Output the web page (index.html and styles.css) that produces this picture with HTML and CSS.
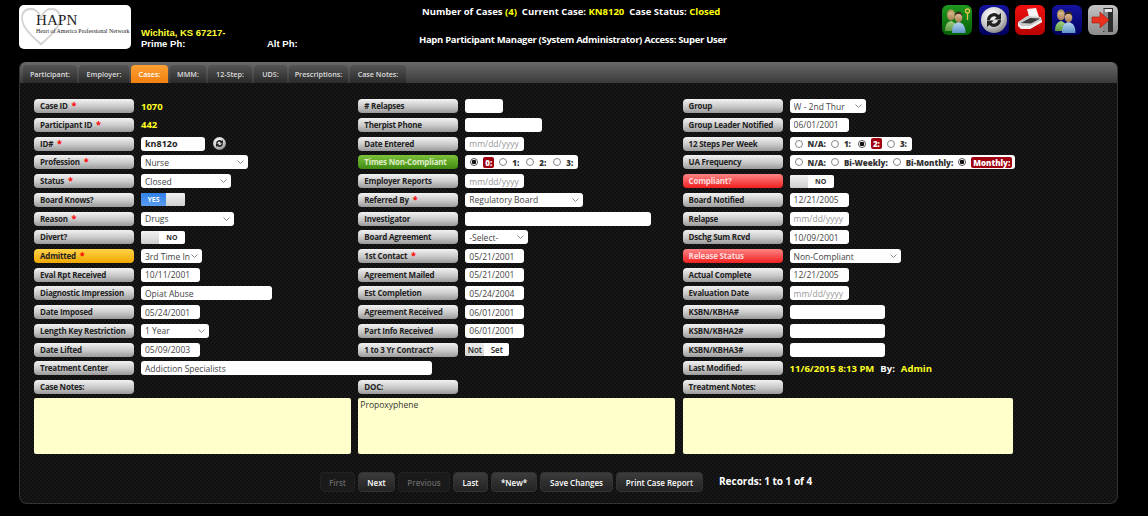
FILE: index.html
```html
<!DOCTYPE html>
<html lang="en">
<head>
<meta charset="utf-8">
<title>HAPN Participant Manager</title>
<link rel="stylesheet" href="styles.css">
</head>
<body>
<svg class="defs" width="0" height="0" aria-hidden="true">
  <defs>
    <linearGradient id="skinA" x1="0" y1="0" x2="0" y2="1"><stop offset="0" stop-color="#e8c49a"/><stop offset="1" stop-color="#a67c52"/></linearGradient>
    <linearGradient id="shirtB" x1="0" y1="0" x2="0" y2="1"><stop offset="0" stop-color="#b9d8f2"/><stop offset="1" stop-color="#5d93c7"/></linearGradient>
    <linearGradient id="shirtG" x1="0" y1="0" x2="0" y2="1"><stop offset="0" stop-color="#a5cf86"/><stop offset="1" stop-color="#5c9a3f"/></linearGradient>
    <radialGradient id="disc" cx=".4" cy=".3" r=".8"><stop offset="0" stop-color="#fff"/><stop offset=".6" stop-color="#c4c4c4"/><stop offset="1" stop-color="#6e6e6e"/></radialGradient>
    <symbol id="people" viewBox="0 0 30 30">
      <path d="M3 26c0-6 2-9 6-10 4 1 6 4 6 10z" fill="url(#shirtG)"/>
      <ellipse cx="9" cy="10.500" rx="3.800" ry="5" fill="url(#skinA)"/>
      <path d="M5.200 9.500C5 6 7 4.500 9 4.500s4 1.500 3.800 5c-1-2-2-2.500-3.800-2.500s-2.800.5-3.800 2.500z" fill="#b59a5e"/>
      <path d="M10 28c0-7 2-10 6.500-11 4.500 1 7 4 7 11z" fill="url(#shirtB)"/>
      <ellipse cx="16.500" cy="12.500" rx="3.800" ry="5" fill="url(#skinA)"/>
      <path d="M12.700 11.500c-.2-3.500 1.800-5 3.800-5s4 1.500 3.800 5c-1-2-2-2.500-3.800-2.500s-2.800.5-3.800 2.500z" fill="#3d2c20"/>
    </symbol>
    <symbol id="swirl" viewBox="0 0 30 30">
      <circle cx="15" cy="15" r="13" fill="url(#disc)"/>
      <path d="M8 15a7 7 0 0 1 11.800-5l2.200-2.200v6.700h-6.700l2.200-2.200a4 4 0 0 0-6.500 2.700zM22 15a7 7 0 0 1-11.800 5L8 22.200v-6.700h6.700l-2.200 2.200a4 4 0 0 0 6.500-2.700z" fill="#222"/>
    </symbol>
  </defs>
</svg>

<header class="top">
  <div class="logo">
    <svg class="logo-heart" viewBox="0 0 60 44" preserveAspectRatio="none" aria-hidden="true"><path d="M30 41C14 30 3 22 3 12 3 5 9 2 15 2c7 0 12 4 15 10 3-6 8-10 15-10 6 0 12 3 12 10 0 10-11 18-27 29z" fill="none" stroke="#d4d4d4" stroke-width="2.500"/></svg>
    <div class="logo-name">HAPN</div>
    <div class="logo-sub">Heart of America Professional Network</div>
  </div>
  <div class="address">
    <div class="addr-city">Wichita, KS 67217-</div>
    <div class="addr-phones"><span class="prime">Prime Ph:</span><span>Alt Ph:</span></div>
  </div>
  <div class="summary">
    <div class="sum-cases">Number of Cases <span class="hl">(4)</span>&nbsp; Current Case: <span class="hl">KN8120</span>&nbsp; Case Status: <span class="hl">Closed</span></div>
    <div class="sum-user">Hapn Participant Manager (System Administrator) Access: Super User</div>
  </div>
  <nav class="tools">
    <a class="tool tool-green"><svg viewBox="0 0 30 30"><use href="#people"/><circle cx="25.500" cy="6" r="2" fill="none" stroke="#e2c24a" stroke-width="1.300"/><path d="M25.500 8v7" stroke="#e2c24a" stroke-width="1.300"/></svg></a>
    <a class="tool tool-navy"><svg viewBox="0 0 30 30"><use href="#swirl"/></svg></a>
    <a class="tool tool-red"><svg viewBox="0 0 30 30"><path d="M12 4l9-1 3 9H14z" fill="#f4f4f4"/><path d="M3 17l9-6 14 1 1 5-12 7H6z" fill="#c9c9c9"/><path d="M6 18l9-5 10 .5-9 5z" fill="#3a3a3a"/><path d="M3 17v4l3 3h9l12-7v-2l-12 6H6z" fill="#f2f2f2"/></svg></a>
    <a class="tool tool-navy"><svg viewBox="0 0 30 30"><use href="#people"/></svg></a>
    <a class="tool tool-grey"><svg viewBox="0 0 30 30"><path d="M15 3h10v24H15z" fill="#2d2d2d"/><path d="M15 3l5 3v22l-5-2z" fill="#8a8a8a"/><path d="M17 4h7v3h-7z" fill="#e6e6e6"/><path d="M4 12h8V7l9 8-9 8v-5H4z" fill="#e8321e" stroke="#9c1a0c" stroke-width=".6"/></svg></a>
  </nav>
</header>

<main class="panel">
  <div class="tabs">
    <a class="tab tab-participant">Participant:</a>
    <a class="tab tab-employer">Employer:</a>
    <a class="tab tab-cases is-active">Cases:</a>
    <a class="tab tab-mmm">MMM:</a>
    <a class="tab tab-step">12-Step:</a>
    <a class="tab tab-uds">UDS:</a>
    <a class="tab tab-rx">Prescriptions:</a>
    <a class="tab tab-notes">Case Notes:</a>
  </div>

  <form class="form">
    <div class="cell"><span class="lab">Case ID <i>*</i></span><span class="readout">1070</span></div>
    <div class="cell"><span class="lab"># Relapses</span><input class="fld w38"></div>
    <div class="cell"><span class="lab">Group</span><select class="fld sel w76"><option>W - 2nd Thur</option></select></div>

    <div class="cell"><span class="lab">Participant ID <i>*</i></span><span class="readout">442</span></div>
    <div class="cell"><span class="lab">Therpist Phone</span><input class="fld w77"></div>
    <div class="cell"><span class="lab">Group Leader Notified</span><input class="fld date" value="06/01/2001"></div>

    <div class="cell"><span class="lab">ID# <i>*</i></span><input class="fld w64 strong" value="kn812o"><svg class="mini" viewBox="0 0 30 30" aria-hidden="true"><use href="#swirl"/></svg></div>
    <div class="cell"><span class="lab">Date Entered</span><input class="fld date" placeholder="mm/dd/yyyy"></div>
    <div class="cell"><span class="lab">12 Steps Per Week</span>
      <div class="radios"><input type="radio" name="steps"><b>N/A:</b><input type="radio" name="steps"><b class="num">1:</b><input type="radio" name="steps" checked><b class="on">2:</b><input type="radio" name="steps"><b class="num">3:</b></div></div>

    <div class="cell"><span class="lab">Profession <i>*</i></span><select class="fld sel w107"><option>Nurse</option></select></div>
    <div class="cell"><span class="lab lab-green">Times Non-Compliant</span>
      <div class="radios"><input type="radio" name="times" checked><b class="on">0:</b><input type="radio" name="times"><b class="num">1:</b><input type="radio" name="times"><b class="num">2:</b><input type="radio" name="times"><b class="num">3:</b></div></div>
    <div class="cell"><span class="lab">UA Frequency</span>
      <div class="radios"><input type="radio" name="ua"><b>N/A:</b><input type="radio" name="ua"><b>Bi-Weekly:</b><input type="radio" name="ua"><b>Bi-Monthly:</b><input type="radio" name="ua" checked><b class="on">Monthly:</b></div></div>

    <div class="cell"><span class="lab">Status <i>*</i></span><select class="fld sel w90"><option>Closed</option></select></div>
    <div class="cell"><span class="lab">Employer Reports</span><input class="fld date" placeholder="mm/dd/yyyy"></div>
    <div class="cell"><span class="lab lab-red">Compliant?</span><span class="toggle"><span class="knob"></span><span class="tog-no">NO</span></span></div>

    <div class="cell"><span class="lab">Board Knows?</span><span class="toggle"><span class="tog-yes">YES</span><span class="knob"></span></span></div>
    <div class="cell"><span class="lab">Referred By <i>*</i></span><select class="fld sel w118"><option>Regulatory Board</option></select></div>
    <div class="cell"><span class="lab">Board Notified</span><input class="fld date" value="12/21/2005"></div>

    <div class="cell"><span class="lab">Reason <i>*</i></span><select class="fld sel w93"><option>Drugs</option></select></div>
    <div class="cell"><span class="lab">Investigator</span><input class="fld w186"></div>
    <div class="cell"><span class="lab">Relapse</span><input class="fld date" placeholder="mm/dd/yyyy"></div>

    <div class="cell"><span class="lab">Divert?</span><span class="toggle"><span class="knob"></span><span class="tog-no">NO</span></span></div>
    <div class="cell"><span class="lab">Board Agreement</span><select class="fld sel w63"><option>-Select-</option></select></div>
    <div class="cell"><span class="lab">Dschg Sum Rcvd</span><input class="fld date" value="10/09/2001"></div>

    <div class="cell"><span class="lab lab-gold">Admitted <i>*</i></span><select class="fld sel w61"><option>3rd Time In</option></select></div>
    <div class="cell"><span class="lab">1st Contact <i>*</i></span><input class="fld date" value="05/21/2001"></div>
    <div class="cell"><span class="lab lab-red">Release Status</span><select class="fld sel w111"><option>Non-Compliant</option></select></div>

    <div class="cell"><span class="lab">Eval Rpt Received</span><input class="fld date" value="10/11/2001"></div>
    <div class="cell"><span class="lab">Agreement Mailed</span><input class="fld date" value="05/21/2001"></div>
    <div class="cell"><span class="lab">Actual Complete</span><input class="fld date" value="12/21/2005"></div>

    <div class="cell"><span class="lab">Diagnostic Impression</span><input class="fld w131" value="Opiat Abuse"></div>
    <div class="cell"><span class="lab">Est Completion</span><input class="fld date" value="05/24/2004"></div>
    <div class="cell"><span class="lab">Evaluation Date</span><input class="fld date" placeholder="mm/dd/yyyy"></div>

    <div class="cell"><span class="lab">Date Imposed</span><input class="fld date" value="05/24/2001"></div>
    <div class="cell"><span class="lab">Agreement Received</span><input class="fld date" value="06/01/2001"></div>
    <div class="cell"><span class="lab">KSBN/KBHA#</span><input class="fld w95"></div>

    <div class="cell"><span class="lab">Length Key Restriction</span><select class="fld sel w68"><option>1 Year</option></select></div>
    <div class="cell"><span class="lab">Part Info Received</span><input class="fld date" value="06/01/2001"></div>
    <div class="cell"><span class="lab">KSBN/KBHA2#</span><input class="fld w95"></div>

    <div class="cell"><span class="lab">Date Lifted</span><input class="fld date" value="05/09/2003"></div>
    <div class="cell"><span class="lab">1 to 3 Yr Contract?</span><span class="segment"><span class="seg-on">Not</span><span class="seg-off">Set</span></span></div>
    <div class="cell"><span class="lab">KSBN/KBHA3#</span><input class="fld w95"></div>

    <div class="cell span2"><span class="lab">Treatment Center</span><input class="fld w291" value="Addiction Specialists"></div>
    <div class="cell"><span class="lab">Last Modified:</span><span class="modified">11/6/2015 8:13 PM<span class="by">By:</span>Admin</span></div>

    <div class="cell"><span class="lab">Case Notes:</span></div>
    <div class="cell"><span class="lab">DOC:</span></div>
    <div class="cell"><span class="lab">Treatment Notes:</span></div>

    <textarea class="note"></textarea>
    <textarea class="note">Propoxyphene</textarea>
    <textarea class="note note-wide"></textarea>
  </form>

  <div class="pager">
    <button type="button" class="btn b-first" disabled>First</button>
    <button type="button" class="btn b-next">Next</button>
    <button type="button" class="btn b-prev" disabled>Previous</button>
    <button type="button" class="btn b-last">Last</button>
    <button type="button" class="btn b-new">*New*</button>
    <button type="button" class="btn b-save">Save Changes</button>
    <button type="button" class="btn b-print">Print Case Report</button>
    <span class="records">Records: 1 to 1 of 4</span>
  </div>
</main>
</body>
</html>
```

FILE: styles.css
```css
* { box-sizing: border-box; }
html, body { margin: 0; height: 516px; overflow: hidden; background: #000; }
body { font-family: "Open Sans", "DejaVu Sans", sans-serif; color: #fff; }
.defs { position: absolute; }

/* header */
.top { display: flex; height: 62px; padding: 5px 30px 0 19px; }
.logo { position: relative; width: 112px; height: 44px; background: #fff; border-radius: 5px; color: #222; overflow: hidden; padding: 8px 0 0 17px; }
.logo-heart { position: absolute; left: 1px; top: 2px; width: 42px; height: 40px; }
.logo-name { position: relative; font: 15px/15px "Liberation Serif", serif; letter-spacing: .2px; }
.logo-sub { position: relative; font: 5.900px/6px "Liberation Serif", serif; white-space: nowrap; }
.address { width: 262px; padding: 22px 0 0 10px; font-family: "Liberation Sans", sans-serif; font-size: 9.500px; font-weight: 700; line-height: 11px; }
.addr-city { color: #ffff33; }
.addr-phones { display: flex; }
.prime { width: 126px; }
.summary { width: 330px; padding: 0 0 0 26px; font-size: 9.500px; font-weight: 700; display: flex; flex-direction: column; gap: 15px; line-height: 13px; white-space: nowrap; }
.sum-cases { margin-left: 3px; }
.sum-user { letter-spacing: -.32px; }
.summary .hl { color: #ffff00; }
.tools { display: flex; gap: 6.500px; margin-left: auto; }
.tool { display: block; width: 30px; height: 30px; border-radius: 6px; }
.tool svg { display: block; width: 30px; height: 30px; }
.tool-green { background: linear-gradient(#1f9a1f, #056005); }
.tool-navy { background: linear-gradient(#1414a0, #00005e); }
.tool-red { background: linear-gradient(#f01010, #b80000); }
.tool-grey { background: linear-gradient(#c4c4c4, #8a8a8a); }

/* panel */
.panel { width: 1099px; height: 442px; margin-left: 19px; border: 1px solid #333; border-top: 0; border-radius: 6px 6px 8px 8px; background-color: #0f0f0f; background-image: linear-gradient(45deg, #181818 25%, transparent 25%, transparent 75%, #181818 75%), linear-gradient(45deg, #181818 25%, transparent 25%, transparent 75%, #181818 75%); background-size: 4px 4px; background-position: 0 0, 2px 2px; }
.tabs { display: flex; gap: 2px; height: 21px; padding: 3px 0 0 3px; border-radius: 6px 6px 0 0; background: linear-gradient(#6a6a6a, #3a3a3a); }
.tab { display: flex; justify-content: center; align-items: center; height: 18px; border-radius: 4px 4px 0 0; background: linear-gradient(#555, #2a2a2a); color: #ddd; font-size: 7.200px; font-weight: 600; white-space: nowrap; }
.tab.is-active { background: linear-gradient(#ffa033, #f08010); color: #fff; }
.tab-participant { width: 54px; }
.tab-employer { width: 50px; }
.tab-cases { width: 37px; }
.tab-mmm { width: 36px; }
.tab-step { width: 44px; }
.tab-uds { width: 33px; }
.tab-rx { width: 59px; }
.tab-notes { width: 56px; }

/* form */
.form { display: grid; grid-template-columns: repeat(3, 324.300px); grid-auto-rows: 18.730px; padding: 13.900px 0 0 14px; }
.cell { display: flex; align-items: center; }
.span2 { grid-column: span 2; }
.lab { flex: none; width: 100px; height: 14px; margin-right: 7px; padding-left: 6px; border-radius: 4px; background: linear-gradient(#f2f2f2, #c8c8c8 55%, #9a9a9a); color: #222; font-size: 8px; font-weight: 700; letter-spacing: -.22px; line-height: 13px; white-space: nowrap; }
.lab i { color: #f00; font-style: normal; font-size: 9px; margin-left: 2px; }
.lab-green { background: linear-gradient(#7ec23a, #3f8a12); color: #dfeec8; }
.lab-red { background: linear-gradient(#ff8585, #f02020); color: #ffdada; }
.lab-gold { background: linear-gradient(#ffd24a, #f0a800); }
.readout { color: #ffff22; font-size: 9.500px; font-weight: 700; }
.fld { flex: none; height: 14px; border: 0; border-radius: 3px; background: #fff; color: #444; font: 8.500px "Open Sans", sans-serif; padding: 0 4px; outline: 0; }
.fld::placeholder { color: #999; opacity: 1; }
.sel { appearance: none; padding: 0 10px 0 4px; background: #fff url("data:image/svg+xml,%3Csvg xmlns='http://www.w3.org/2000/svg' width='7' height='4'%3E%3Cpath d='M.5.5l3 3 3-3' fill='none' stroke='%23888'/%3E%3C/svg%3E") no-repeat right 4px center; }
.strong { color: #222; font-weight: 700; font-size: 9px; }
.date { width: 59px; }
.w38 { width: 38px; } .w61 { width: 61px; } .w63 { width: 63px; } .w64 { width: 64px; } .w68 { width: 68px; }
.w76 { width: 76px; } .w77 { width: 77px; } .w90 { width: 90px; } .w93 { width: 93px; } .w95 { width: 95px; }
.w107 { width: 107px; } .w111 { width: 111px; } .w118 { width: 118px; } .w131 { width: 131px; } .w186 { width: 186px; } .w291 { width: 291px; }
.mini { width: 15px; height: 15px; margin-left: 6.500px; }

.radios { display: flex; align-items: center; height: 14px; padding: 0 3px 0 5px; border-radius: 3px; background: #fff; color: #333; font: 700 8px "Open Sans", sans-serif; white-space: nowrap; }
.radios input { appearance: none; flex: none; width: 8px; height: 8px; margin: 0 5px 0 5px; border: 1px solid #888; border-radius: 50%; background: #fff; }
.radios input:first-child { margin-left: 0; }
.radios input:checked { background: radial-gradient(circle, #111 0 2px, #fff 2.500px); border-color: #555; }
.radios .on { padding: 0 2px; border-radius: 2px; background: #a00010; color: #fff; }
.radios .num { padding-right: 2px; }

.toggle { display: flex; width: 44px; height: 13px; border-radius: 2px; overflow: hidden; background: #fff; font-size: 7px; font-weight: 700; line-height: 13px; text-align: center; }
.knob { flex: 1; background: linear-gradient(#f2f2f2, #cfcfcf); }
.tog-yes { width: 25px; background: linear-gradient(#2f80e8, #5a9cf0); color: #fff; }
.tog-no { width: 26px; color: #333; }
.segment { display: flex; width: 44px; height: 13px; border-radius: 2px; overflow: hidden; background: #fff; color: #222; font-size: 8px; font-weight: 600; line-height: 13px; text-align: center; }
.seg-on { width: 19px; background: linear-gradient(#eee, #d4d4d4); }
.seg-off { flex: 1; }
.modified { color: #ffff22; font-size: 9.500px; font-weight: 700; white-space: nowrap; }
.by { color: #fff; margin: 0 6px; }

.note { display: block; height: 56px; width: 317px; margin-top: 2px; grid-row: span 3; border: 0; border-radius: 2px; background: #ffffcc; color: #333; font: 8.500px "Open Sans", sans-serif; padding: 1px 2px; resize: none; outline: 0; }
.note-wide { width: 330px; }

/* pager */
.pager { display: flex; align-items: center; gap: 3px; margin-top: 19.500px; padding-left: 300px; }
.btn { height: 20px; padding: 0; border: 1px solid #333; border-radius: 4px; background: linear-gradient(#3c3c3c, #232323); color: #fff; font: 600 8px "Open Sans", sans-serif; }
.btn:disabled { background: #1a1a1a; border-color: #222; color: #666; }
.b-first { width: 35px; } .b-next { width: 37px; } .b-prev { width: 52px; } .b-last { width: 35px; }
.b-new { width: 46px; } .b-save { width: 73px; } .b-print { width: 87px; }
.records { margin-left: 13px; margin-top: -3px; font-size: 10px; font-weight: 700; }
```
